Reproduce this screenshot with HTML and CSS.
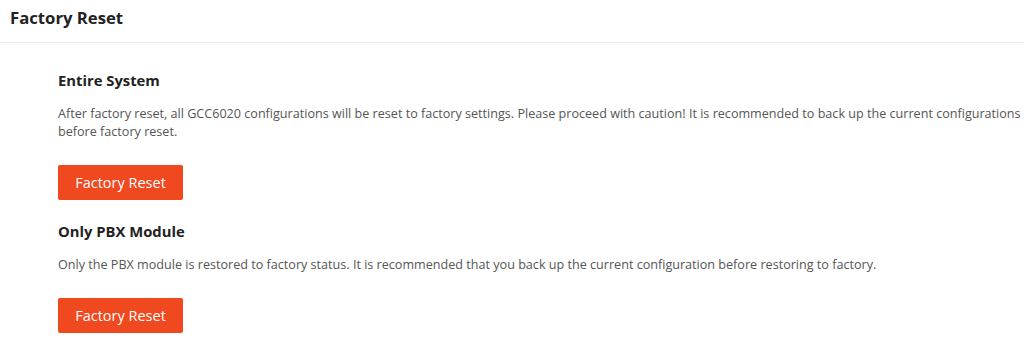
FILE: index.html
```html
<!DOCTYPE html>
<html>
<head>
<meta charset="utf-8">
<link rel="stylesheet" href="styles.css">
</head>
<body>
<div class="page">
  <header class="page-header">
    <h1 class="page-title">Factory Reset</h1>
  </header>
  <main class="content">
    <section class="section">
      <h2 class="section-title">Entire System</h2>
      <p class="section-text">After factory reset, all GCC6020 configurations will be reset to factory settings. Please proceed with caution! It is recommended to back up the current configurations before factory reset.</p>
      <button class="btn-reset">Factory Reset</button>
    </section>
    <section class="section">
      <h2 class="section-title">Only PBX Module</h2>
      <p class="section-text">Only the PBX module is restored to factory status. It is recommended that you back up the current configuration before restoring to factory.</p>
      <button class="btn-reset">Factory Reset</button>
    </section>
  </main>
</div>
</body>
</html>
```

FILE: styles.css
```css
* { box-sizing: border-box; }
html, body {
  margin: 0;
  padding: 0;
  background: #fff;
  font-family: "Open Sans", "Liberation Sans", sans-serif;
  overflow: hidden;
}
.page {
  width: 1060px;
}
.page-header {
  height: 43px;
  border-bottom: 1px solid #ececec;
  padding: 6px 0 0 10px;
}
.page-title {
  margin: 0;
  font-size: 16.7px;
  font-weight: 700;
  color: #222;
  line-height: 24px;
}
.content {
  padding: 26px 0 0 58px;
}
.section {
  display: flex;
  flex-direction: column;
  align-items: flex-start;
}
.section + .section {
  margin-top: 20px;
}
.section-title {
  margin: 0;
  font-size: 14.8px;
  font-weight: 700;
  color: #222;
  line-height: 22px;
}
.section-text {
  margin: 14px 0 0 0;
  width: 975px;
  font-size: 12.6px;
  line-height: 18px;
  color: #555;
}
.btn-reset {
  margin-top: 24px;
  width: 125px;
  height: 35px;
  background: #f0481f;
  color: #fff;
  border: none;
  border-radius: 2px;
  font-family: "Open Sans", "Liberation Sans", sans-serif;
  font-size: 14.5px;
  padding: 0;
}
```
